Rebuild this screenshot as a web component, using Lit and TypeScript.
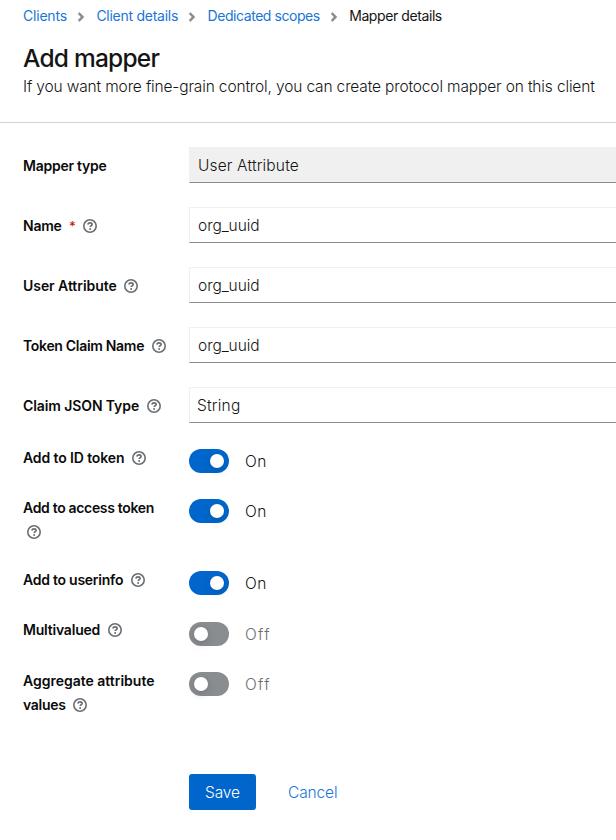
import { LitElement, html, css, nothing } from "lit";
import { customElement } from "lit/decorators.js";
import { styleMap } from "lit/directives/style-map.js";

interface Run { text: string; track: number; }
interface Field { label: Run; value: Run; kind?: string; required?: boolean; help?: boolean; }
interface Toggle { lines: Run[]; on: boolean; cls: string; }

const run = (text: string, track = 0): Run => ({ text, track });

const FIELDS: Field[] = [
  { label: run("Mapper type", -0.25), value: run("User Attribute", 0.16), kind: "readonly", help: false },
  { label: run("Name", -0.25), value: run("org_uuid", -0.04), required: true },
  { label: run("User Attribute", -0.05), value: run("org_uuid", -0.04) },
  { label: run("Token Claim Name", -0.31), value: run("org_uuid", -0.04) },
  { label: run("Claim JSON Type", -0.1), value: run("String", 0.2), kind: "select" },
];

const TOGGLES: Toggle[] = [
  { lines: [run("Add to ID token", -0.12)], on: true, cls: "h50" },
  { lines: [run("Add to access token", -0.33), run("")], on: true, cls: "h72" },
  { lines: [run("Add to userinfo", -0.25)], on: true, cls: "h51" },
  { lines: [run("Multivalued", -0.2)], on: false, cls: "h50 raised" },
  { lines: [run("Aggregate attribute", -0.01), run("values", -0.28)], on: false, cls: "h72" },
];

@customElement("app-root")
export class AppRoot extends LitElement {
  static styles = css`
    :host { display: block; width: 616px; height: 840px; overflow: hidden; background: #fff;
      color: #151515; font-family: Inter, "Liberation Sans", sans-serif; font-size: 15.5px; font-weight: 350; line-height: 24px; }
    * { box-sizing: border-box; }
    .header { height: 123px; padding: 5px 0 0 23px; border-bottom: 1px solid #d2d2d2; white-space: nowrap; }
    .crumbs { display: flex; align-items: center; height: 22px; font-size: 14px; line-height: 22px; font-weight: 400; }
    .crumbs svg { width: 8px; height: 14px; margin: 1px 11.5px 0 10px; fill: #8a8d90; stroke: #8a8d90; stroke-width: 14; }
    a { color: #1a75d8; text-decoration: none; }
    h1 { margin: 15px 0 0; font-size: 24.5px; line-height: 32px; font-weight: 450; letter-spacing: -0.77px; }
    p { margin: 1px 0 0; line-height: 24px; letter-spacing: -0.147px; }
    form { padding: 24px 0 0 23px; }
    .row { display: grid; grid-template-columns: 166px 1fr; height: 60px; white-space: nowrap; }
    .label { font-size: 14px; font-weight: 600; line-height: 24px; color: #0b0b0b; }
    .row .label { padding-top: 7px; }
    .line { display: flex; align-items: center; height: 24px; }
    .req { color: #c9190b; margin-left: 7.5px; width: 6px; font-size: 13px; font-weight: 500; }
    .help { width: 14px; height: 14px; margin-left: 7.5px; flex: none; }
    .line.alone .help { margin-left: 4px; }
    .input { height: 36px; padding: 6px 8px 4px; border: 1px solid #f0f0f0; border-right: 0; border-bottom-color: #8a8d90; }
    .input.readonly { background: #f0f0f0; border-bottom-color: #8a8d90; }
    .input.select { padding-left: 7px; }
    .toggle { display: grid; grid-template-columns: 166px 1fr; white-space: nowrap; align-items: start; }
    .toggle .label { margin-top: -1px; }
    .toggle.raised .label { margin-top: -2px; }
    .h50 { height: 50px; } .h51 { height: 51px; } .h72 { height: 72px; }
    .switch { display: flex; align-items: center; padding-top: 2px; gap: 16px; }
    .state { padding-top: 1px; height: 24px; line-height: 24px; }
    .track { display: flex; align-items: center; width: 40px; height: 24px; border-radius: 12px; padding: 0 5px; background: #8a8d90; }
    .on .track { background: #06c; justify-content: flex-end; }
    .knob { width: 14px; height: 14px; border-radius: 50%; background: #fff; box-shadow: 0 4px 8px rgba(3,3,3,.12), 0 0 4px rgba(3,3,3,.06); }
    .off { color: #6a6e73; letter-spacing: 1.3px; }
    .on .state { letter-spacing: .6px; }
    .actions { display: flex; align-items: center; margin: 32px 0 0 166px; gap: 32px; }
    .actions a { letter-spacing: -0.12px; padding-top: 2px; }
    .save { width: 67px; height: 36px; line-height: 36px; padding-top: 1px; text-align: center; letter-spacing: -0.1px; color: #fff; background: #06c; border-radius: 3px; }
  `;

  text(r: Run) {
    return html`<span style=${styleMap({ letterSpacing: `${r.track}px` })}>${r.text}</span>`;
  }

  link(r: Run) {
    return html`<a style=${styleMap({ letterSpacing: `${r.track}px` })}>${r.text}</a>`;
  }

  chevron() {
    return html`<svg viewBox="0 0 256 512"><path d="M224.3 273l-136 136c-9.4 9.4-24.6 9.4-33.9 0l-22.6-22.6c-9.4-9.4-9.4-24.6 0-33.9l96.4-96.4-96.4-96.4c-9.4-9.4-9.4-24.6 0-33.9L54.3 103c9.4-9.4 24.6-9.4 33.9 0l136 136c9.5 9.4 9.5 24.6.1 34z"/></svg>`;
  }

  help() {
    return html`<svg class="help" viewBox="0 0 14 14" fill="none" stroke="#6a6e73">
      <circle cx="7" cy="7" r="6.2" stroke-width="1.6"/>
      <path d="M4.8 5.5C5.1 4.4 5.9 3.9 7 3.9c1.2 0 2.1.6 2.1 1.6 0 1.3-1.9 1.2-1.9 2.5" stroke-width="1.7"/>
      <circle cx="7.1" cy="9.9" r="1" fill="#6a6e73" stroke="none"/>
    </svg>`;
  }

  render() {
    return html`
      <header class="header">
        <nav class="crumbs">
          ${this.link(run("Clients", -0.2))}${this.chevron()}${this.link(run("Client details", -0.26))}${this.chevron()}${this.link(run("Dedicated scopes", -0.45))}${this.chevron()}${this.text(run("Mapper details", -0.41))}
        </nav>
        <h1>Add mapper</h1>
        <p>If you want more fine-grain control, you can create protocol mapper on this client</p>
      </header>
      <form>
        ${FIELDS.map((f) => html`
          <div class="row">
            <div class="label"><div class="line">${this.text(f.label)}${f.required ? html`<span class="req">*</span>` : nothing}${f.help === false ? nothing : this.help()}</div></div>
            <div class="input ${f.kind ?? ""}">${this.text(f.value)}</div>
          </div>`)}
        ${TOGGLES.map((t) => html`
          <div class="toggle ${t.cls}">
            <div class="label">${t.lines.map((l, i) => html`
              <div class="line ${l.text ? "" : "alone"}">${l.text ? this.text(l) : nothing}${i === t.lines.length - 1 ? this.help() : nothing}</div>`)}</div>
            <div class="switch ${t.on ? "on" : "off"}"><span class="track"><span class="knob"></span></span><span class="state">${t.on ? "On" : "Off"}</span></div>
          </div>`)}
        <div class="actions"><span class="save">Save</span><a>Cancel</a></div>
      </form>`;
  }
}
